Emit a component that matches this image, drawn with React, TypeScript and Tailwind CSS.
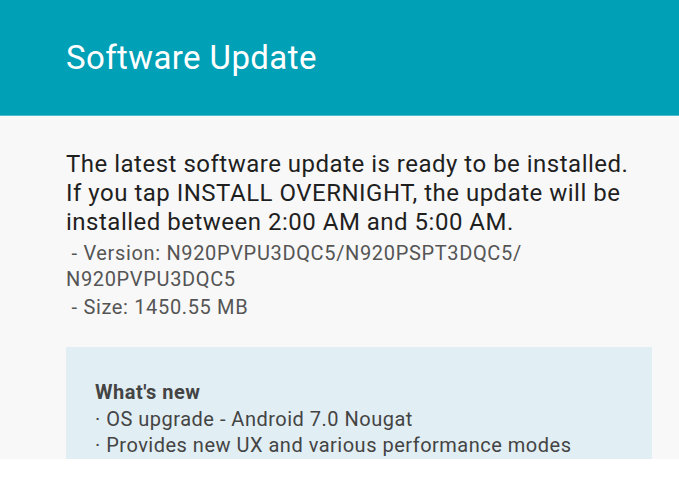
export default function App() {
  return (
    <div className="w-[679px] h-[478px] bg-white overflow-hidden font-['Roboto',sans-serif]">
      <header className="h-[116px] bg-[#00a0b6] border-b border-[#4fbfcd] flex items-center pl-[66px]">
        <h1 className="text-[33px] font-normal text-white tracking-[0.4px]">Software Update</h1>
      </header>

      <main className="h-[343px] bg-[#f8f8f8] pt-[34px] pl-[66px] pr-[20px]">
        <p className="text-[24px] leading-[29px] text-[#1f1f1f] tracking-[0.5px]">
          The latest software update is ready to be installed.
          <br />
          If you tap INSTALL OVERNIGHT, the update will be
          <br />
          installed between 2:00 AM and 5:00 AM.
        </p>
        <div className="mt-[3px] text-[20px] leading-[26px] text-[#555] tracking-[0.65px]">
          <p>
            &nbsp;- Version: N920PVPU3DQC5/N920PSPT3DQC5/
            <br />
            N920PVPU3DQC5
          </p>
          <p className="mt-[2px]">&nbsp;- Size: 1450.55 MB</p>
        </div>

        <section className="mt-[27px] mr-[7px] bg-[#e1eef3] pl-[29px] pt-[32px] h-[112px] text-[20px] leading-[26px] text-[#444] tracking-[0.5px]">
          <h2 className="font-bold">What's new</h2>
          <p className="mt-[1px]">· OS upgrade - Android 7.0 Nougat</p>
          <p>· Provides new UX and various performance modes</p>
        </section>
      </main>
    </div>
  );
}
